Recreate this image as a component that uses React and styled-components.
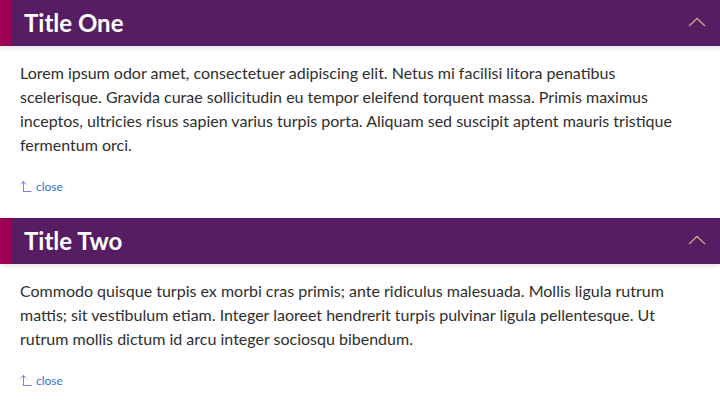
import React, { useState } from 'react';
import styled, { createGlobalStyle } from 'styled-components';

const GlobalStyle = createGlobalStyle`
    body {
        margin: 0;
        background: #FFFFFF;
        font-family: Lato, "Open Sans", sans-serif;
    }
`;

const SectionSC = styled.section`
    display: flex;
    flex-direction: column;
`;

const Header = styled.button`
    display: flex;
    align-items: center;
    justify-content: space-between;
    height: 46px;
    width: 100%;
    padding: 0 14px 0 12px;
    border: none;
    border-left: 12px solid #9B0053;
    background: #561D63;
    box-shadow: 0 2px 4px rgba(0, 0, 0, .12);
    color: #FFFFFF;
    font-family: inherit;
    cursor: pointer;
    box-sizing: border-box;
    text-align: left;
    position: relative;
    z-index: 1;
`;

const Title = styled.h2`
    margin: 0;
    font-size: 24px;
    font-weight: 700;
    line-height: 1;
`;

const Chevron = styled.svg`
    width: 18px;
    height: 10px;
    margin-top: -2px;
`;

const Body = styled.div`
    padding: 15px 20px 24px 20px;
`;

const Text = styled.p`
    margin: 0;
    font-size: 16px;
    line-height: 24px;
    color: #2E2E2E;
`;

const CloseLink = styled.a`
    display: flex;
    align-items: center;
    gap: 4px;
    height: 16px;
    margin-top: 21px;
    font-size: 12px;
    color: #3570E0;
    text-decoration: none;
    cursor: pointer;
`;

const CloseIcon = () => (
    <svg width="12" height="12" viewBox="0 0 12 12" fill="none" stroke="#7F7BEF" strokeWidth="1" strokeLinecap="square">
        <path d="M3.5 11.5V1.5M1 4L3.5 1.5 6 4M3.5 11.5H11" />
    </svg>
);

const sections = [
    {
        title: 'Title One',
        text: 'Lorem ipsum odor amet, consectetuer adipiscing elit. Netus mi facilisi litora penatibus scelerisque. Gravida curae sollicitudin eu tempor eleifend torquent massa. Primis maximus inceptos, ultricies risus sapien varius turpis porta. Aliquam sed suscipit aptent mauris tristique fermentum orci.',
    },
    {
        title: 'Title Two',
        text: 'Commodo quisque turpis ex morbi cras primis; ante ridiculus malesuada. Mollis ligula rutrum mattis; sit vestibulum etiam. Integer laoreet hendrerit turpis pulvinar ligula pellentesque. Ut rutrum mollis dictum id arcu integer sociosqu bibendum.',
    },
];

const Section = ({ title, text }) => {
    const [open, setOpen] = useState(true);

    return (
        <SectionSC>
            <Header onClick={() => setOpen(!open)}>
                <Title>{title}</Title>
                <Chevron viewBox="0 0 18 10" fill="none" stroke="#C9A48E" strokeWidth="1.3">
                    <path d={open ? 'M1 9L9 1.5 17 9' : 'M1 1L9 8.5 17 1'} />
                </Chevron>
            </Header>
            {open && (
                <Body>
                    <Text>{text}</Text>
                    <CloseLink onClick={() => setOpen(false)}>
                        <CloseIcon />
                        close
                    </CloseLink>
                </Body>
            )}
        </SectionSC>
    )
}

const App = () => {

    return (
        <>
            <GlobalStyle />
            {sections.map((s) => <Section key={s.title} {...s} />)}
        </>
    )
}

export default App
